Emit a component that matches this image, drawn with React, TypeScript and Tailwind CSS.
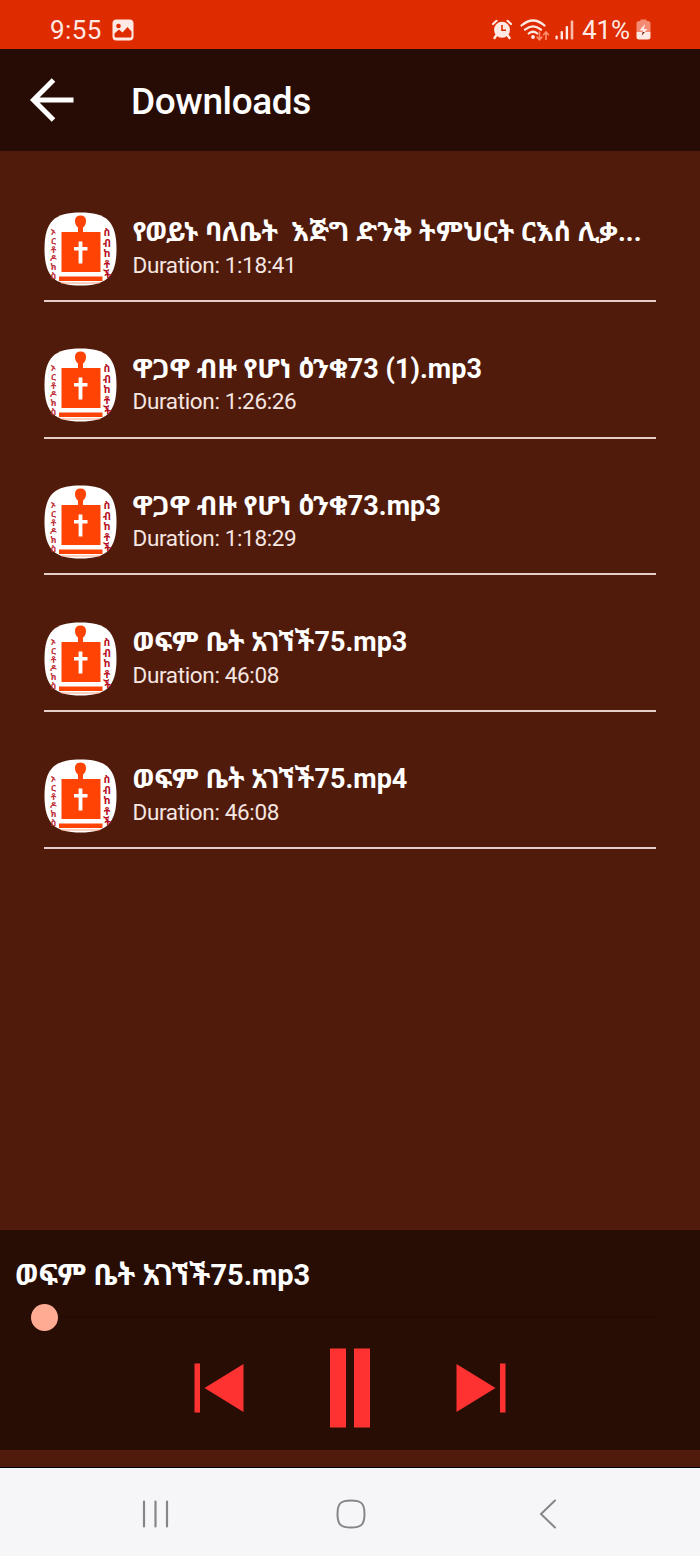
const tracks = [
  { title: "የወይኑ ባለቤት  እጅግ ድንቅ ትምህርት ርእሰ ሊቃ...", duration: "1:18:41" },
  { title: "ዋጋዋ ብዙ የሆነ ዕንቁ73 (1).mp3", duration: "1:26:26" },
  { title: "ዋጋዋ ብዙ የሆነ ዕንቁ73.mp3", duration: "1:18:29" },
  { title: "ወፍም ቤት አገኘች75.mp3", duration: "46:08" },
  { title: "ወፍም ቤት አገኘች75.mp4", duration: "46:08" },
];

const leftLetters = ["ኦ", "ር", "ቶ", "ዶ", "ክ", "ስ"];
const rightLetters = ["ስ", "ብ", "ከ", "ቶ", "ች"];

const StatusBar = () => (
  <div className="flex h-[49px] shrink-0 items-center bg-[#de2c00] pl-[50px] pr-[49px] pt-[10px] text-[26px] leading-none text-[#ffe9e4]">
    <span className="w-[53px] whitespace-nowrap tracking-[0.4px]">9:55</span>
    <svg className="ml-[9px]" width="22" height="22" viewBox="0 0 22 22">
      <rect x="0.5" y="0.5" width="21" height="21" rx="4" fill="#ffe9e4" />
      <circle cx="6.5" cy="7" r="2.3" fill="#de2c00" />
      <path d="M2.5 17v-2.5l4.5-4 3.5 3 5-5.5 4 4.5V17q0 1.500-1.500 1.500H4Q2.500 18.500 2.500 17Z" fill="#de2c00" />
    </svg>
    <svg className="ml-auto" width="20" height="21" viewBox="0 0 20 21">
      <path d="M1 5 4.500 1.800M19 5 15.500 1.800" stroke="#ffe9e4" strokeWidth="2.200" strokeLinecap="round" />
      <path d="m4.500 16-2 3M15.500 16l2 3" stroke="#ffe9e4" strokeWidth="2.400" strokeLinecap="round" />
      <circle cx="10" cy="10.800" r="8" fill="#ffe9e4" />
      <path d="M10 6v5.300h4" fill="none" stroke="#de2c00" strokeWidth="1.600" />
    </svg>
    <svg className="ml-[8px]" width="30" height="22" viewBox="0 0 30 22" fill="none" strokeLinecap="round">
      <path d="M1.500 6.500Q13 -3.500 24.500 6.500M5 10.700q8-6.500 16 0M8.700 14.500q4.300-3.500 8.600 0" stroke="#ffe9e4" strokeWidth="2.200" />
      <circle cx="13" cy="18" r="1.900" fill="#ffe9e4" />
      <path d="M19.500 13v7.500m-2.500-2.500 2.500 2.700 2.500-2.700M26 20.500V13m-2.500 2.700L26 13l2.500 2.700" stroke="#ff8e70" strokeWidth="1.600" />
    </svg>
    <svg className="ml-[5px]" width="20" height="20" viewBox="0 0 20 20" fill="#ffe9e4">
      <rect x="0.500" y="15.500" width="2.200" height="4" rx="1" />
      <rect x="5.600" y="11" width="2.400" height="8.500" rx="1" />
      <rect x="10.700" y="6" width="2.400" height="13.500" rx="1" />
      <rect x="15.700" y="0.500" width="2.600" height="19" rx="1" opacity="0.750" />
    </svg>
    <span className="ml-[7px] w-[51px] whitespace-nowrap tracking-[-0.1px]">41%</span>
    <svg className="ml-[3px]" width="15" height="21" viewBox="0 0 15 21">
      <path d="M4.500 2V0.500h6V2H12q2.500 0 2.500 2.500V13H0.500V4.500Q0.500 2 3 2Z" fill="#f58a72" />
      <path d="M0.500 13h14v5q0 2.500-2.500 2.500H3Q0.500 20.500 0.500 18Z" fill="#ffe9e4" />
      <path d="M9 5 3.500 11.500H7L5.800 16.500 11.500 10H8Z" fill="#ffe9e4" />
      <path d="M6.600 13h2.300l-3.100 3.500Z" fill="#6b1a08" />
    </svg>
  </div>
);

const AppIcon = () => (
  <svg className="h-[74px] w-[73px] shrink-0" viewBox="0 0 73 74">
    <path
      d="M36.500 0.500C62 0.500 72.500 9 72.500 37S62 73.500 36.500 73.500 0.500 65 0.500 37 11 0.500 36.500 0.500Z"
      fill="#fff"
    />
    <path d="M34 20v-4.500Q31 13 31 9q0-5.500 5.500-5.500T42 9q0 4-3 6.500V20H56.500V60H17.500V20Z" fill="#ff4305" />
    <path d="M15 64.500h43.500v4.500H15Z" fill="#ff4305" />
    <path d="M17 71h39" stroke="#ff8a60" strokeWidth="0.800" />
    <path d="M34.600 29.500h3.800v5.500H43.500v3.500H38.400V51.500H34.600V38.500H30V35h4.600Z" fill="#fff" />
    <g fill="#c03038" fontSize="9" fontWeight="700" textAnchor="middle">
      {leftLetters.map((letter, i) => (
        <text key={i} x="9.500" y={23 + i * 8.8}>
          {letter}
        </text>
      ))}
    </g>
    <g fill="#b80f22" fontSize="10.500" fontWeight="700" textAnchor="middle">
      {rightLetters.map((letter, i) => (
        <text key={i} x="63" y={24 + i * 10.5}>
          {letter}
        </text>
      ))}
    </g>
  </svg>
);

const Player = () => (
  <section className="flex h-[220px] shrink-0 flex-col bg-[#280d05]">
    <p className="h-[73px] whitespace-pre pl-[15px] pt-[26px] text-[29px] font-bold leading-[38px] text-white">
      ወፍም ቤት አገኘች75.mp3
    </p>
    <div className="flex h-[27px] items-center pl-[31px] pr-[44px] pt-[1px]">
      <div className="size-[27px] rounded-full bg-[#ffab93]" />
      <div className="h-[2px] flex-1 bg-[#250b04]" />
    </div>
    <div className="flex items-center justify-center gap-[86px] pt-[18px]">
      <svg width="50" height="50" viewBox="0 0 50 50" fill="#ff3232">
        <path d="M0.500 0.500h5.500v49H0.500ZM49.500 1v48L10.500 25Z" />
      </svg>
      <svg width="40" height="80" viewBox="0 0 40 80" fill="#ff3232">
        <path d="M0 0.500h16v79H0ZM24 0.500h16v79H24Z" />
      </svg>
      <svg width="50" height="50" viewBox="0 0 50 50" fill="#ff3232">
        <path d="M44 0.500h5.500v49H44ZM0.500 1v48L39.500 25Z" />
      </svg>
    </div>
  </section>
);

const NavBar = () => (
  <nav className="flex h-[89px] shrink-0 items-center border-t border-black bg-[#f6f6f8] pl-[141px] pt-[4px]">
    <svg width="29" height="30" viewBox="0 0 29 30" fill="none" stroke="#868688" strokeWidth="2.200" strokeLinecap="round">
      <path d="M3 2.500v25M14.500 2.500v25M26 2.500v25" />
    </svg>
    <svg className="ml-[166px]" width="30" height="30" viewBox="0 0 30 30" fill="none" stroke="#868688" strokeWidth="2">
      <path d="M15 1.500C25 1.500 28.500 4 28.500 15S25 28.500 15 28.500 1.500 26 1.500 15 5 1.500 15 1.500Z" />
    </svg>
    <svg className="ml-[173px]" width="18" height="30" viewBox="0 0 18 30" fill="none" stroke="#868688" strokeWidth="2" strokeLinecap="round">
      <path d="M16 1.500 2 15l14 13.500" />
    </svg>
  </nav>
);

export default function App() {
  return (
    <div className="flex h-[1556px] w-[700px] flex-col overflow-hidden bg-[#511b0b] font-[Roboto,'Noto_Sans_Ethiopic',sans-serif]">
      <StatusBar />
      <header className="flex h-[102px] shrink-0 items-center bg-[#260c05] pl-[29px]">
        <svg width="46" height="46" viewBox="0 0 46 46" fill="none" stroke="#fff" strokeWidth="5">
          <path d="M44.500 23H5M24.500 3 4.500 23l20 20" />
        </svg>
        <h1 className="ml-[56px] pt-[2px] text-[37px] font-medium leading-none tracking-[-0.4px] text-white">Downloads</h1>
      </header>
      <main className="flex-1 px-[44px] pt-[14px]">
        {tracks.map((track) => (
          <div key={track.title} className="flex h-[136.8px] border-b-2 border-[#e6cfcb] pt-[46.500px]">
            <AppIcon />
            <div className="ml-[15.500px] pt-[1.500px]">
              <p className="whitespace-pre text-[27px] font-bold leading-[38px] text-white">{track.title}</p>
              <p className="-mt-[1.500px] text-[22.500px] leading-[30px] tracking-[-0.35px] text-[#f5e6e2]">
                Duration: {track.duration}
              </p>
            </div>
          </div>
        ))}
      </main>
      <Player />
      <div className="h-[17px] shrink-0" />
      <NavBar />
    </div>
  );
}
